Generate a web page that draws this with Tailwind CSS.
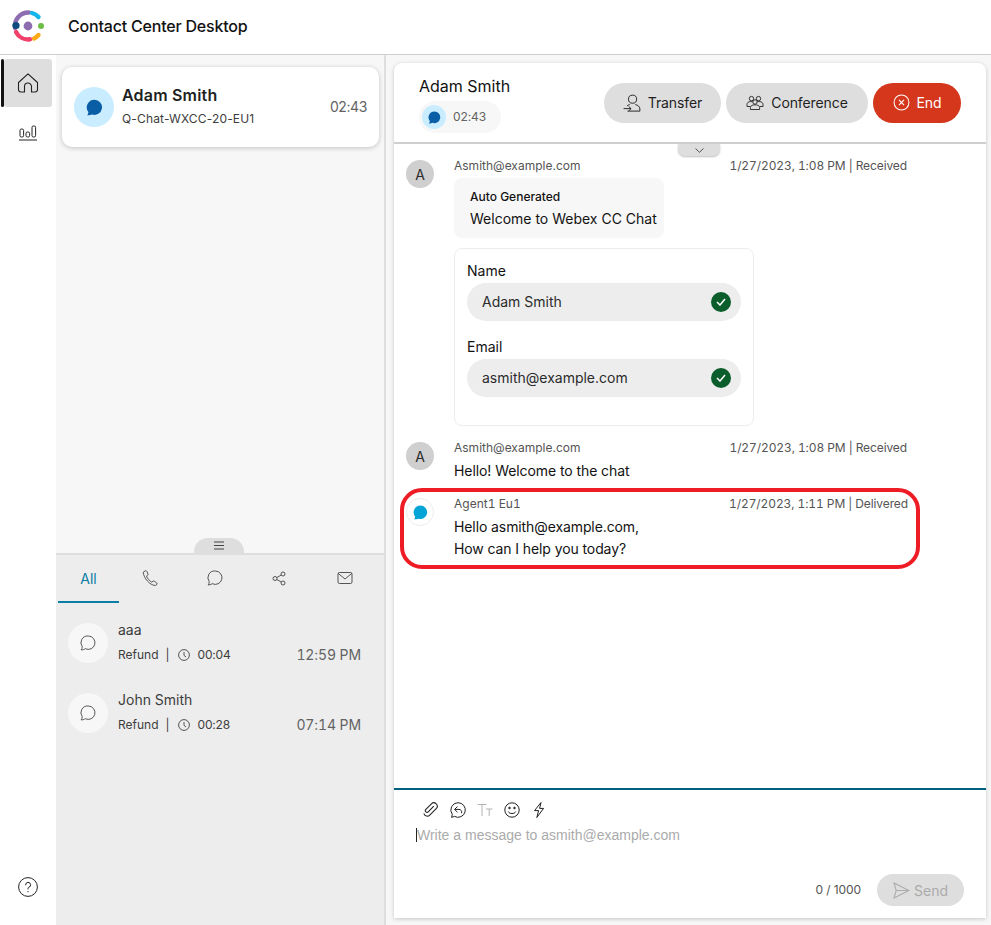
<!DOCTYPE html>
<html lang="en">
<head>
  <meta charset="UTF-8" />
  <title>Contact Center Desktop</title>
  <script src="https://cdn.jsdelivr.net/npm/@tailwindcss/browser@4"></script>
</head>
<body class="h-[925px] w-[991px] overflow-hidden bg-white font-['Inter',sans-serif] text-[#121212]">

  <!-- top bar -->
  <header class="flex h-[55px] items-center border-b border-[#cfcfcf] pb-[3px]">
    <svg class="ml-[11px] h-[34px] w-[34px]" viewBox="0 0 34 34" fill="none" stroke-width="4.4" stroke-linecap="round">
      <path d="M4 19 A13.5 13.5 0 0 1 18 3.5" stroke="#8d6db0" />
      <path d="M21 4 A13.5 13.5 0 0 1 27.5 8" stroke="#13b5ea" />
      <path d="M5 23 A13.5 13.5 0 0 0 19 30.3" stroke="#f2416b" />
      <path d="M23 29.5 A13.5 13.5 0 0 0 27.5 26" stroke="#fbab18" />
      <circle cx="5" cy="16.5" r="3.6" fill="#0f4a7d" stroke="none" />
      <circle cx="17" cy="17" r="4.4" fill="#8d6db0" stroke="none" />
      <circle cx="30" cy="17" r="3" fill="#6cbe45" stroke="none" />
    </svg>
    <h1 class="ml-[23px] text-[16px] font-medium tracking-[-0.2px]">Contact Center Desktop</h1>
  </header>

  <div class="flex h-[870px]">
    <!-- nav rail -->
    <nav class="flex w-[56px] flex-col items-center pt-[4px]">
      <div class="relative flex h-[48px] w-[48px] items-center justify-center rounded-[3px] bg-[#dedede]">
        <span class="absolute left-[-3px] top-0 h-full w-[3px] rounded-full bg-[#121212]"></span>
        <svg class="h-[22px] w-[22px]" viewBox="0 0 22 22" fill="none" stroke="#222" stroke-width="1.1" stroke-linejoin="round">
          <path d="M1.5 10.5 L11 1.8 L20.5 10.5 V17.5 A2.5 2.5 0 0 1 18 20 H14.5 V14.5 A3.5 3.5 0 0 0 7.5 14.5 V20 H4 A2.5 2.5 0 0 1 1.5 17.5 Z" />
        </svg>
      </div>
      <svg class="mt-[17px] h-[18px] w-[20px]" viewBox="0 0 20 18" fill="none" stroke="#222" stroke-width="1">
        <rect x="2" y="5" width="3.6" height="8" rx="1.4" />
        <rect x="8" y="8" width="3.6" height="5" rx="1.4" />
        <rect x="14" y="2" width="3.6" height="11" rx="1.4" />
        <path d="M1 16 H19" />
      </svg>
      <svg class="mb-[28px] mt-auto h-[20px] w-[20px]" viewBox="0 0 20 20" fill="none" stroke="#222" stroke-width="1">
        <circle cx="10" cy="10" r="9.4" />
        <path d="M7.6 7.8 A2.5 2.5 0 1 1 10.6 10.3 C10 10.6 10 11 10 12" stroke-linecap="round" />
        <circle cx="10" cy="14.6" r="0.7" fill="#222" stroke="none" />
      </svg>
    </nav>

    <!-- left column -->
    <aside class="flex w-[330px] flex-col border-r-2 border-[#dedede] bg-[#f7f7f7]">
      <div class="relative h-[500px] border-b-2 border-[#dedede] px-[6px] pt-[12px]">
        <div class="flex h-[80px] w-[317px] items-center rounded-[10px] bg-white px-[12px] shadow-[0_1px_5px_rgba(0,0,0,0.22)]">
          <span class="flex h-[40px] w-[40px] shrink-0 items-center justify-center rounded-full bg-[#c9ecff]">
            <svg class="h-[17px] w-[17px]" viewBox="0 0 17 17"><path d="M8.5 .7 A7.6 7.6 0 1 1 6 15.5 C4.5 16.2 2.8 16.4 1.2 16.2 C2 15.2 2.3 14.2 2.4 13 A7.6 7.6 0 0 1 8.5 .7 Z" fill="#0a5ea6" /></svg>
          </span>
          <div class="-mt-[3px] ml-[8px] flex-1">
            <div class="text-[16px] font-semibold leading-[24px] tracking-[0.2px] text-[#1f1f1f]">Adam Smith</div>
            <div class="mt-[3px] text-[12px] leading-[18px] tracking-[0.15px] text-[#3d3d3d]">Q-Chat-WXCC-20-EU1</div>
          </div>
          <span class="-mt-[2px] text-[14px] tracking-[-0.4px] text-[#636363]">02:43</span>
        </div>
        <div class="absolute bottom-0 left-[138px] flex h-[15px] w-[50px] items-center justify-center rounded-t-[14px] bg-[#dedede]">
          <svg class="h-[9px] w-[10px]" viewBox="0 0 10 9" stroke="#444" stroke-width="1"><path d="M0 1 H10 M0 4.5 H10 M0 8 H10" /></svg>
        </div>
      </div>

      <div class="flex-1 bg-[#ededed]">
        <div class="flex h-[48px] pl-[2px]">
          <div class="flex w-[61px] items-center justify-center border-b-2 border-[#0a7ea4] text-[14px] text-[#0a7ea4]">All</div>
          <div class="-ml-[2px] grid grid-cols-[65px_65px_65px_65px] items-center justify-items-center pb-[2px]">
            <svg class="h-[16px] w-[16px]" viewBox="0 0 16 16" fill="none" stroke="#444" stroke-width=".9"><path d="M1.2 2.2 L3.4 .8 C4 .5 4.6 .8 4.8 1.3 L6 4 C6.2 4.6 6 5 5.6 5.3 L4.5 6 C5.5 8.6 7.4 10.8 9.8 12.2 L11 11.2 C11.4 10.9 11.9 10.9 12.3 11.2 L14.8 13 C15.3 13.4 15.3 14 14.9 14.4 L13.4 15.5 C8 15.5 1.6 8 1.2 2.2 Z" /></svg>
            <svg class="h-[16px] w-[16px]" viewBox="0 0 16 16" fill="none" stroke="#444" stroke-width=".9"><path d="M8.3 1 A6.7 6.7 0 1 1 5.3 13.7 C4 14.6 2.6 14.9 1.2 14.9 C1.9 14 2.2 13 2.2 11.6 A6.7 6.7 0 0 1 8.3 1 Z" /></svg>
            <svg class="h-[15px] w-[15px]" viewBox="0 0 15 15" fill="none" stroke="#444" stroke-width=".9"><circle cx="11" cy="3" r="2" /><circle cx="3" cy="7.5" r="2" /><circle cx="11" cy="12" r="2" /><path d="M5 6.5 L9.2 4 M5 8.6 L9.2 11" /></svg>
            <svg class="h-[16px] w-[16px]" viewBox="0 0 16 16" fill="none" stroke="#444" stroke-width=".9"><rect x="1" y="2.5" width="14" height="11" rx="1.5" /><path d="M1.2 3.4 L8 9 L14.8 3.4" /></svg>
          </div>
        </div>

        <div class="pl-[12px] pr-[23px] pt-[17px]">
          <div class="flex h-[70px] items-start">
            <span class="mt-[3px] flex h-[40px] w-[40px] shrink-0 items-center justify-center rounded-full bg-[#f7f7f7]">
              <svg class="h-[16px] w-[16px]" viewBox="0 0 16 16" fill="none" stroke="#444" stroke-width=".9"><path d="M8.3 1 A6.7 6.7 0 1 1 5.3 13.7 C4 14.6 2.6 14.9 1.2 14.9 C1.9 14 2.2 13 2.2 11.6 A6.7 6.7 0 0 1 8.3 1 Z" /></svg>
            </span>
            <div class="ml-[10px] flex-1">
              <div class="text-[14px] leading-[20px] text-[#3d3d3d]">aaa</div>
              <div class="mt-[6px] flex items-center text-[12px] leading-[18px] text-[#3d3d3d]">
                <span>Refund</span><span class="ml-[7px] mr-[8px]">|</span>
                <svg class="mr-[8px] h-[12px] w-[12px]" viewBox="0 0 12 12" fill="none" stroke="#444" stroke-width=".9"><circle cx="6" cy="6" r="5.4" /><path d="M6 3 V6.4 L8 8" /></svg>
                <span class="tracking-[-0.2px]">00:04</span>
                <span class="ml-auto text-[14px] tabular-nums tracking-[-0.1px] text-[#636363]">12:59 PM</span>
              </div>
            </div>
          </div>
          <div class="flex h-[70px] items-start">
            <span class="mt-[3px] flex h-[40px] w-[40px] shrink-0 items-center justify-center rounded-full bg-[#f7f7f7]">
              <svg class="h-[16px] w-[16px]" viewBox="0 0 16 16" fill="none" stroke="#444" stroke-width=".9"><path d="M8.3 1 A6.7 6.7 0 1 1 5.3 13.7 C4 14.6 2.6 14.9 1.2 14.9 C1.9 14 2.2 13 2.2 11.6 A6.7 6.7 0 0 1 8.3 1 Z" /></svg>
            </span>
            <div class="ml-[10px] flex-1">
              <div class="text-[14px] leading-[20px] text-[#3d3d3d]">John Smith</div>
              <div class="mt-[6px] flex items-center text-[12px] leading-[18px] text-[#3d3d3d]">
                <span>Refund</span><span class="ml-[7px] mr-[8px]">|</span>
                <svg class="mr-[8px] h-[12px] w-[12px]" viewBox="0 0 12 12" fill="none" stroke="#444" stroke-width=".9"><circle cx="6" cy="6" r="5.4" /><path d="M6 3 V6.4 L8 8" /></svg>
                <span class="tracking-[-0.2px]">00:28</span>
                <span class="ml-auto text-[14px] tabular-nums tracking-[-0.1px] text-[#636363]">07:14 PM</span>
              </div>
            </div>
          </div>
        </div>
      </div>
    </aside>

    <!-- chat pane -->
    <main class="flex-1 bg-[#f7f7f7] pb-[7px] pl-[8px] pr-[5px] pt-[8px]">
      <div class="flex h-full flex-col rounded-t-[8px] bg-white shadow-[0_1px_4px_rgba(0,0,0,0.2)]">
        <!-- contact header -->
        <div class="flex h-[81px] shrink-0 items-start border-b-2 border-[#cfcfcf] px-[25px] pt-[12px]">
          <div>
            <div class="text-[16px] leading-[22px]">Adam Smith</div>
            <div class="mt-[4px] flex h-[32px] w-[82px] items-center rounded-full bg-[#f7f7f7] pl-[3px]">
              <span class="flex h-[24px] w-[24px] items-center justify-center rounded-full bg-[#c9ecff]">
                <svg class="h-[13px] w-[13px]" viewBox="0 0 17 17"><path d="M8.5 .7 A7.6 7.6 0 1 1 6 15.5 C4.5 16.2 2.8 16.4 1.2 16.2 C2 15.2 2.3 14.2 2.4 13 A7.6 7.6 0 0 1 8.5 .7 Z" fill="#0a5ea6" /></svg>
              </span>
              <span class="ml-[7px] text-[12px] tracking-[-0.1px] text-[#636363]">02:43</span>
            </div>
          </div>
          <div class="ml-auto mt-[8px] flex gap-[5px] text-[14px] tracking-[-0.1px]">
            <button class="flex h-[40px] w-[117px] items-center justify-center rounded-full bg-[#dedede] pb-[1px] text-[#1f1f1f]">
              <svg class="mr-[7px] h-[18px] w-[18px]" viewBox="0 0 16 16" fill="none" stroke="#222" stroke-width=".85"><circle cx="8.5" cy="4.6" r="3.6" /><path d="M4 15.2 H15 V13.4 C15 11.2 13.2 9.8 11 9.4 M6 9.4 C5 9.6 4.3 10 3.6 10.6 M0.5 13 H7 M5 11 L7.2 13 L5 15" /></svg>
              Transfer
            </button>
            <button class="flex h-[40px] w-[142px] items-center justify-center rounded-full bg-[#dedede] pb-[1px] text-[#1f1f1f]">
              <svg class="mr-[7px] h-[18px] w-[18px]" viewBox="0 0 18 18" fill="none" stroke="#222" stroke-width=".9"><circle cx="5.5" cy="4.6" r="2.2" /><circle cx="12.5" cy="4.6" r="2.2" /><circle cx="9" cy="8" r="2.2" /><path d="M1 12.5 V10.5 C1 8.6 2.6 7.6 4.4 7.6 H6.6 M17 12.5 V10.5 C17 8.6 15.4 7.6 13.6 7.6 H11.4 M1 12.5 H4.4 M17 12.5 H13.6 M4.4 15.5 V13.6 C4.4 11.6 6.6 10.8 9 10.8 C11.4 10.8 13.6 11.6 13.6 13.6 V15.5 Z" /></svg>
              Conference
            </button>
            <button class="flex h-[40px] w-[88px] items-center justify-center rounded-full bg-[#d4371c] pb-[1px] text-white">
              <svg class="mr-[7px] h-[17px] w-[17px]" viewBox="0 0 16 16" fill="none" stroke="#fff" stroke-width="1"><circle cx="8" cy="8" r="7" /><path d="M5.6 5.6 L10.4 10.4 M10.4 5.6 L5.6 10.4" /></svg>
              End
            </button>
          </div>
        </div>

        <!-- messages -->
        <div class="relative flex-1 pl-[12px]">
          <div class="absolute left-[284px] top-0 flex h-[12px] w-[42px] items-center justify-center rounded-b-[7px] bg-[#dedede] shadow-[0_1px_2px_rgba(0,0,0,0.25)]">
            <svg class="h-[5px] w-[9px]" viewBox="0 0 9 5" fill="none" stroke="#444" stroke-width=".9"><path d="M.5 .5 L4.5 4.3 L8.5 .5" /></svg>
          </div>

          <div class="flex pt-[16px]">
            <span class="flex h-[28px] w-[28px] shrink-0 items-center justify-center rounded-full bg-[#cfcfcf] text-[14px] text-[#2b2b2b]">A</span>
            <div class="ml-[20px] w-[453px]">
              <div class="-mt-[2px] flex justify-between text-[12px] leading-[16px] text-[#545454]"><span>Asmith@example.com</span><span class="tabular-nums tracking-[-0.1px]">1/27/2023, 1:08 PM | Received</span></div>
              <div class="mt-[4px] h-[60px] w-[210px] rounded-[8px] bg-[#f7f7f7] pl-[16px] pt-[10px]">
                <div class="text-[12px] font-medium leading-[18px]">Auto Generated</div>
                <div class="mt-[3px] text-[14px] leading-[20px]">Welcome to Webex CC Chat</div>
              </div>
              <div class="mt-[10px] h-[178px] w-[300px] rounded-[8px] border border-[#ededed] px-[12px] pt-[12px]">
                <div class="text-[14px] leading-[20px]">Name</div>
                <div class="mt-[2px] flex h-[38px] w-[274px] items-center justify-between rounded-full bg-[#ededed] pl-[15px] pr-[10px] text-[14px] text-[#2b2b2b]">
                  <span class="pb-[2px]">Adam Smith</span>
                  <span class="flex h-[20px] w-[20px] items-center justify-center rounded-full bg-[#0b5d2c]"><svg class="h-[8px] w-[10px]" viewBox="0 0 10 8" fill="none" stroke="#fff" stroke-width="1.5"><path d="M1 4 L4 7 L9 1" /></svg></span>
                </div>
                <div class="mt-[16px] text-[14px] leading-[20px]">Email</div>
                <div class="mt-[2px] flex h-[38px] w-[274px] items-center justify-between rounded-full bg-[#ededed] pl-[15px] pr-[10px] text-[14px] text-[#2b2b2b]">
                  <span class="pb-[2px]">asmith@example.com</span>
                  <span class="flex h-[20px] w-[20px] items-center justify-center rounded-full bg-[#0b5d2c]"><svg class="h-[8px] w-[10px]" viewBox="0 0 10 8" fill="none" stroke="#fff" stroke-width="1.5"><path d="M1 4 L4 7 L9 1" /></svg></span>
                </div>
              </div>
            </div>
          </div>

          <div class="mt-[14px] flex">
            <span class="mt-[2px] flex h-[28px] w-[28px] shrink-0 items-center justify-center rounded-full bg-[#cfcfcf] text-[14px] text-[#2b2b2b]">A</span>
            <div class="ml-[20px] w-[453px]">
              <div class="flex justify-between text-[12px] leading-[16px] text-[#545454]"><span>Asmith@example.com</span><span class="tabular-nums tracking-[-0.1px]">1/27/2023, 1:08 PM | Received</span></div>
              <div class="mt-[5px] text-[14px] leading-[20px] tracking-[-0.08px]">Hello! Welcome to the chat</div>
            </div>
          </div>

          <!-- annotation drawn on the screenshot -->
          <div class="relative -ml-[6px] mt-[7px] flex h-[81px] w-[520px] rounded-[22px] border-[4px] border-[#ee1c25] pl-[2px] pt-[5px]">
            <span class="mt-[1px] flex h-[28px] w-[28px] shrink-0 items-center justify-center rounded-full border border-[#ededed] bg-white">
              <svg class="h-[15px] w-[15px]" viewBox="0 0 17 17"><path d="M8.5 .7 A7.6 7.6 0 1 1 6 15.5 C4.5 16.2 2.8 16.4 1.2 16.2 C2 15.2 2.3 14.2 2.4 13 A7.6 7.6 0 0 1 8.5 .7 Z" fill="#04a5d6" /></svg>
            </span>
            <div class="ml-[20px] w-[454px]">
              <div class="-mt-[1px] flex justify-between text-[12px] leading-[16px] text-[#545454]"><span class="tabular-nums">Agent1 Eu1</span><span class="tabular-nums tracking-[-0.1px]">1/27/2023, 1:11 PM | Delivered</span></div>
              <div class="mt-[4px] text-[14px] leading-[22px] tracking-[-0.1px]">Hello asmith@example.com,<br />How can I help you today?</div>
            </div>
          </div>
        </div>

        <!-- composer -->
        <div class="h-[130px] shrink-0 border-t-2 border-[#00607f] px-[22px]">
          <div class="flex h-[39px] items-center gap-[11px] pl-[6px]">
            <svg class="h-[17px] w-[17px]" viewBox="0 0 16 16" fill="none" stroke="#222" stroke-width="1" stroke-linecap="round"><g transform="rotate(45 8 8)"><path d="M8 4 V11 A1.6 1.6 0 0 1 4.8 11 V3.6 A3.2 3.2 0 0 1 11.2 3.6 V12.2 A3.2 3.2 0 0 1 6.6 15.2" /></g></svg>
            <svg class="h-[16px] w-[16px]" viewBox="0 0 16 16" fill="none" stroke="#222" stroke-width="1"><path d="M8 .7 A7.3 7.3 0 1 1 4.5 14.4 L1.6 15.4 L2.3 12.4 A7.3 7.3 0 0 1 8 .7 Z M7.5 4.5 L4.6 7.4 L7.5 10.2 M4.8 7.4 H9 C11 7.4 12 9 11.6 11.2" /></svg>
            <svg class="h-[16px] w-[16px]" viewBox="0 0 16 16" fill="none" stroke="#aaa" stroke-width=".9"><path d="M.5 2.5 H9.5 M5 2.5 V14 M9 7 H15.5 M12.2 7 V14" /></svg>
            <svg class="h-[16px] w-[16px]" viewBox="0 0 16 16" fill="none" stroke="#222" stroke-width="1"><circle cx="8" cy="8" r="7.2" /><circle cx="5.5" cy="6" r=".8" fill="#222" /><circle cx="10.5" cy="6" r=".8" fill="#222" /><path d="M4.2 9.5 C5.5 12.2 10.5 12.2 11.8 9.5" /></svg>
            <svg class="h-[16px] w-[16px]" viewBox="0 0 16 16" fill="none" stroke="#222" stroke-width="1"><path d="M10 .5 L3.5 8.6 H7.6 L5.8 15.5 L12.6 6.4 H8.6 Z" /></svg>
          </div>
          <div class="-mt-[1px] flex h-[14px] items-center border-l border-[#222] font-['Liberation_Sans',sans-serif] text-[14px] text-[#ababab]">Write a message to asmith@example.com</div>
          <div class="mt-[32px] flex items-center justify-end">
            <span class="text-[12px] tracking-[-0.1px] text-[#545454]">0 / 1000</span>
            <button class="ml-[16px] flex h-[32px] w-[87px] items-center justify-center rounded-full bg-[#dedede] text-[14px] text-[#ababab]">
              <svg class="mr-[4px] h-[17px] w-[17px]" viewBox="0 0 16 16" fill="none" stroke="#ababab" stroke-width="1"><path d="M1 1 L15 8 L1 15 L3 8 Z M3 8 H15" /></svg>
              Send
            </button>
          </div>
        </div>
      </div>
    </main>
  </div>
</body>
</html>
